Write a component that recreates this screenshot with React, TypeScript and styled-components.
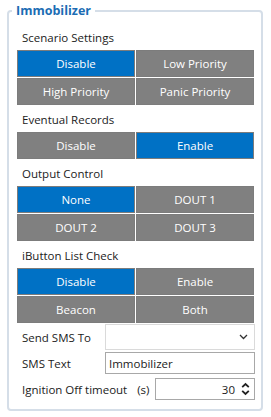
import styled, { createGlobalStyle } from 'styled-components';

const GlobalStyle = createGlobalStyle`
    html, body {
        margin: 0;
        padding: 0;
        background: #ffffff;
    }
    body {
        font-family: 'Open Sans', 'Noto Sans', sans-serif;
        font-size: 11.5px;
        color: #1b1b1b;
    }
`;

const Page = styled.div`
    padding: 2px 8px 0 7px;
    width: 271px;
    box-sizing: border-box;
`;

const Group = styled.fieldset`
    margin: 0;
    padding: 3px 7px 9px 8px;
    border: 2px solid #d5dee8;
    border-radius: 4px;
    min-width: 0;
`;

const Legend = styled.legend`
    padding: 0 4px;
    margin-left: -5px;
    color: #1b6db4;
    font-weight: 700;
    font-size: 12.5px;
    line-height: 18px;
`;

const SectionLabel = styled.div`
    height: 27px;
    display: flex;
    align-items: center;
    padding-left: 5px;
    padding-top: 1px;
    box-sizing: border-box;
`;

const SegmentGrid = styled.div`
    display: grid;
    grid-template-columns: 1fr 1fr;
    gap: 1px;
`;

const Segment = styled.button<{ $active?: boolean }>`
    height: 27px;
    margin: 0;
    padding: 0;
    border: 1px solid #7c7c7c;
    background: ${(p) => (p.$active ? '#0071c5' : '#808080')};
    color: #ffffff;
    font-family: inherit;
    font-size: 11.5px;
    cursor: pointer;
`;

const FieldRow = styled.div<{ $gap?: number }>`
    display: grid;
    grid-template-columns: 88px 1fr;
    align-items: center;
    margin-top: ${(p) => p.$gap ?? 0}px;
`;

const FieldLabel = styled.span`
    padding-left: 5px;
`;

const SelectBox = styled.div`
    height: 26px;
    border: 1px solid #dadada;
    box-sizing: border-box;
    display: flex;
    align-items: center;
    justify-content: flex-end;
    padding-right: 6px;
    margin-right: -1px;
`;

const TextBox = styled.div`
    height: 22px;
    border: 1px solid #a8a8a8;
    box-sizing: border-box;
    display: flex;
    align-items: center;
    padding-left: 3px;
    margin-right: -1px;
`;

const TimeoutRow = styled.div`
    display: flex;
    align-items: center;
    margin-top: 4px;
`;

const Unit = styled.span`
    margin-left: 10px;
    width: 18px;
`;

const NumberBox = styled.div`
    flex: 1;
    height: 22px;
    border: 1px solid #a8a8a8;
    box-sizing: border-box;
    display: flex;
    align-items: center;
    justify-content: flex-end;
    padding-right: 4px;
    margin-right: -1px;
`;

const Spinner = styled.svg`
    margin-left: 6px;
`;

function Chevron() {
    return (
        <svg width="9" height="6" viewBox="0 0 9 6">
            <path d="M1 1 L4.5 4.5 L8 1" fill="none" stroke="#333" strokeWidth="1.3" />
        </svg>
    );
}

type SectionProps = {
    title: string;
    options: string[];
    active: number;
};

function Section({ title, options, active }: SectionProps) {
    return (
        <>
            <SectionLabel>{title}</SectionLabel>
            <SegmentGrid>
                {options.map((o, i) => (
                    <Segment key={o} $active={i === active}>
                        {o}
                    </Segment>
                ))}
            </SegmentGrid>
        </>
    );
}

export default function App() {
    return (
        <Page>
            <GlobalStyle />
            <Group>
                <Legend>Immobilizer</Legend>
                <Section
                    title="Scenario Settings"
                    options={['Disable', 'Low Priority', 'High Priority', 'Panic Priority']}
                    active={0}
                />
                <Section title="Eventual Records" options={['Disable', 'Enable']} active={1} />
                <Section title="Output Control" options={['None', 'DOUT 1', 'DOUT 2', 'DOUT 3']} active={0} />
                <Section
                    title="iButton List Check"
                    options={['Disable', 'Enable', 'Beacon', 'Both']}
                    active={0}
                />
                <FieldRow $gap={1}>
                    <FieldLabel>Send SMS To</FieldLabel>
                    <SelectBox>
                        <Chevron />
                    </SelectBox>
                </FieldRow>
                <FieldRow $gap={2}>
                    <FieldLabel>SMS Text</FieldLabel>
                    <TextBox>Immobilizer</TextBox>
                </FieldRow>
                <TimeoutRow>
                    <FieldLabel>Ignition Off timeout</FieldLabel>
                    <Unit>(s)</Unit>
                    <NumberBox>
                        30
                        <Spinner width="9" height="14" viewBox="0 0 9 14">
                            <path d="M1.2 5.2 L4.5 2 L7.8 5.2" fill="none" stroke="#222" strokeWidth="1.8" />
                            <path d="M1.2 8.8 L4.5 12 L7.8 8.8" fill="none" stroke="#222" strokeWidth="1.8" />
                        </Spinner>
                    </NumberBox>
                </TimeoutRow>
            </Group>
        </Page>
    );
}
